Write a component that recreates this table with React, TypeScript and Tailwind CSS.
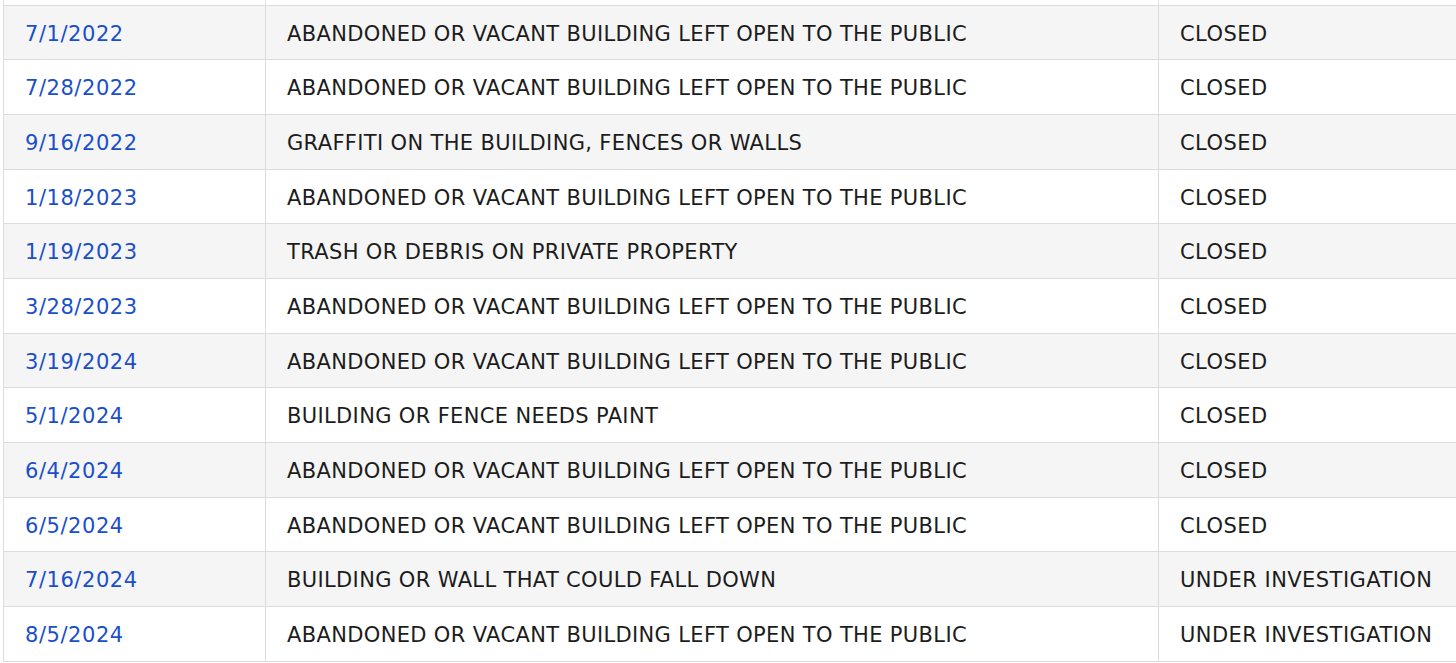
const rows: [string, string, string][] = [
  ['7/1/2022', 'ABANDONED OR VACANT BUILDING LEFT OPEN TO THE PUBLIC', 'CLOSED'],
  ['7/28/2022', 'ABANDONED OR VACANT BUILDING LEFT OPEN TO THE PUBLIC', 'CLOSED'],
  ['9/16/2022', 'GRAFFITI ON THE BUILDING, FENCES OR WALLS', 'CLOSED'],
  ['1/18/2023', 'ABANDONED OR VACANT BUILDING LEFT OPEN TO THE PUBLIC', 'CLOSED'],
  ['1/19/2023', 'TRASH OR DEBRIS ON PRIVATE PROPERTY', 'CLOSED'],
  ['3/28/2023', 'ABANDONED OR VACANT BUILDING LEFT OPEN TO THE PUBLIC', 'CLOSED'],
  ['3/19/2024', 'ABANDONED OR VACANT BUILDING LEFT OPEN TO THE PUBLIC', 'CLOSED'],
  ['5/1/2024', 'BUILDING OR FENCE NEEDS PAINT', 'CLOSED'],
  ['6/4/2024', 'ABANDONED OR VACANT BUILDING LEFT OPEN TO THE PUBLIC', 'CLOSED'],
  ['6/5/2024', 'ABANDONED OR VACANT BUILDING LEFT OPEN TO THE PUBLIC', 'CLOSED'],
  ['7/16/2024', 'BUILDING OR WALL THAT COULD FALL DOWN', 'UNDER INVESTIGATION'],
  ['8/5/2024', 'ABANDONED OR VACANT BUILDING LEFT OPEN TO THE PUBLIC', 'UNDER INVESTIGATION'],
];

export default function App() {
  return (
    <div className="w-[1456px] h-[663px] overflow-hidden bg-white pl-[3px] font-['DejaVu_Sans',sans-serif] text-[21px] tracking-[0.35px] text-[#1c1c1c]">
      <div className="w-[1480px] -mt-[49px]">
        {/* partial row above the visible area */}
        <div className="grid grid-cols-[262px_893px_1fr] h-[54.67px] border-b border-[#dcdcdc] bg-white">
          <div className="border-l border-[#dcdcdc]" />
          <div className="border-l border-[#dcdcdc]" />
          <div className="border-l border-[#dcdcdc]" />
        </div>
        {rows.map(([date, desc, status], i) => (
          <div
            key={i}
            className={`grid grid-cols-[262px_893px_1fr] h-[54.67px] border-b border-[#dcdcdc] ${i % 2 === 0 ? 'bg-[#f5f5f5]' : 'bg-white'}`}
          >
            <div className="border-l border-[#dcdcdc] flex items-center pl-[21px] pt-[4px]">
              <a className="text-[#1a4fc9] tracking-[0.55px]">{date}</a>
            </div>
            <div className="border-l border-[#dcdcdc] flex items-center pl-[21px] pt-[4px] whitespace-nowrap">{desc}</div>
            <div className="border-l border-[#dcdcdc] flex items-center pl-[21px] pt-[4px] whitespace-nowrap tracking-[0.45px]">{status}</div>
          </div>
        ))}
      </div>
    </div>
  );
}
